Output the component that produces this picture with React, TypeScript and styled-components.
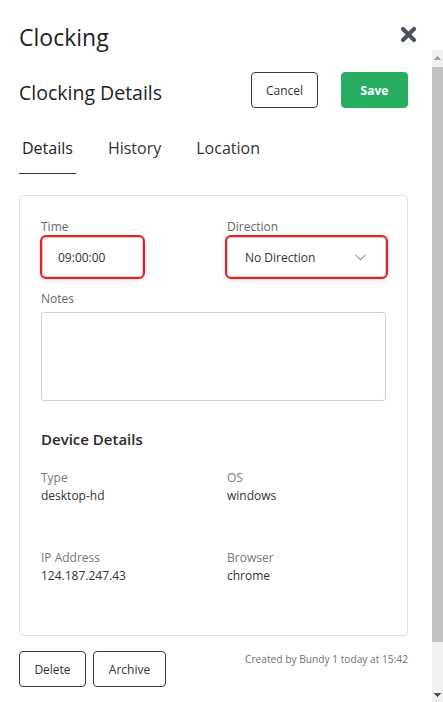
import React from 'react';
import styled, { createGlobalStyle } from 'styled-components';

const GlobalStyle = createGlobalStyle`
    * { box-sizing: border-box; }
    html, body {
        margin: 0;
        padding: 0;
        height: 100%;
        overflow: hidden;
        background: #fff;
    }
    body {
        font-family: "Open Sans", "Noto Sans", Arial, sans-serif;
        color: #333;
    }
`

const Page = styled.div`
    height: 100vh;
    display: flex;
    flex-direction: column;
`

const Header = styled.div`
    height: 50px;
    flex-shrink: 0;
    display: flex;
    justify-content: space-between;
    align-items: flex-start;
    padding: 21px 26px 0 19px;
`

const Title = styled.h1`
    margin: 0;
    font-size: 23px;
    font-weight: 400;
    color: #222;
    line-height: normal;
`

const CloseButton = styled.button`
    margin-top: 5px;
    width: 17px;
    height: 17px;
    padding: 0;
    border: none;
    background: transparent;
    cursor: pointer;
    display: flex;
`

const ScrollArea = styled.div`
    flex: 1;
    min-height: 0;
    display: flex;
`

const Pane = styled.div`
    flex: 1;
    overflow: hidden;
`

/* the window's scrollbar, drawn since the headless page hides native ones */
const ScrollTrack = styled.div`
    width: 11px;
    flex-shrink: 0;
    background: #f1f1f1;
    display: flex;
    flex-direction: column;
`

const ScrollArrow = styled.div<{ $down?: boolean }>`
    height: 15px;
    flex-shrink: 0;
    margin-top: ${p => (p.$down ? 'auto' : '0')};
    background-repeat: no-repeat;
    background-size: 7px 4px;
    background-position: center;
    background-image: ${p =>
        p.$down
            ? 'conic-gradient(from -41deg at 50% 100%, #505050 82deg, transparent 0)'
            : 'conic-gradient(from 139deg at 50% 0, #a3a3a3 82deg, transparent 0)'};
`

const ScrollThumb = styled.div`
    margin-top: 2px;
    height: 575px;
    background: #c1c1c1;
`

const Content = styled.div`
    padding: 22px 24px 67px 19px;
`

const TopRow = styled.div`
    display: flex;
    align-items: center;
`

const Heading = styled.h2`
    flex: 1;
    margin: 0;
    padding-top: 5px;
    font-size: 19.5px;
    font-weight: 400;
    color: #222;
    line-height: normal;
`

const Actions = styled.div`
    display: flex;
    gap: 23px;
`

const OutlineButton = styled.button<{ $width: number }>`
    width: ${p => p.$width}px;
    height: 36px;
    padding: 0;
    border: 1px solid #3a3a3a;
    border-radius: 4px;
    background: #fff;
    font-family: inherit;
    font-size: 12px;
    color: #333;
    cursor: pointer;
`

const SaveButton = styled.button`
    width: 67px;
    height: 36px;
    padding: 0;
    border: 1px solid #28ae60;
    border-radius: 4px;
    background: #28ae60;
    font-family: inherit;
    font-size: 12px;
    font-weight: 700;
    color: #fff;
    cursor: pointer;
`

const Tabs = styled.div`
    display: flex;
    gap: 29px;
    margin-top: 29px;
`

const Tab = styled.div<{ $active?: boolean }>`
    padding: 0 3px 14px;
    font-size: 16px;
    line-height: 22px;
    color: ${p => (p.$active ? '#222' : '#333')};
    border-bottom: 1.5px solid ${p => (p.$active ? '#333' : 'transparent')};
    cursor: pointer;
`

const Card = styled.div`
    margin-top: 21px;
    border: 1px solid #e2e2e2;
    border-radius: 4px;
    padding: 23px 21px 50px 21px;
`

const FieldGrid = styled.div`
    display: grid;
    grid-template-columns: 1fr 1fr;
    column-gap: 27px;
`

const Field = styled.div`
    display: flex;
    flex-direction: column;
    align-items: flex-start;
`

const Label = styled.label`
    font-size: 12px;
    line-height: 16px;
    color: #666;
    margin-bottom: 2px;
`

const TimeInput = styled.input`
    width: 101px;
    height: 40px;
    margin-left: 1px;
    padding: 0 0 0 15px;
    border: 1px solid #d0d0d0;
    border-radius: 4px;
    box-shadow: 0 1px 6px rgba(0, 0, 0, 0.25);
    outline: 2px solid #ee1c24;
    outline-offset: 0;
    font-family: inherit;
    font-size: 12px;
    color: #333;
    background: #fff;
`

const Select = styled.div`
    width: 100%;
    height: 40px;
    padding: 0 19px 0 17px;
    display: flex;
    align-items: center;
    justify-content: space-between;
    border: 1px solid #d0d0d0;
    border-radius: 4px;
    box-shadow: 0 1px 6px rgba(0, 0, 0, 0.25);
    outline: 2px solid #ee1c24;
    outline-offset: 0;
    font-size: 12px;
    color: #333;
    background: #fff;
    cursor: pointer;
`

const NotesField = styled(Field)`
    margin-top: 13.5px;
    align-items: stretch;
`

const Notes = styled.textarea`
    display: block;
    margin-top: 3px;
    width: 100%;
    height: 89px;
    border: 1px solid #cfcfcf;
    border-radius: 3px;
    resize: none;
    font-family: inherit;
    font-size: 12px;
`

const SectionTitle = styled.h3`
    margin: 28px 0 0;
    font-size: 15px;
    font-weight: 600;
    line-height: 20px;
    color: #2a2a2a;
`

const DeviceGrid = styled.div`
    display: grid;
    grid-template-columns: 1fr 1fr;
    column-gap: 27px;
    row-gap: 44px;
    margin-top: 20.5px;
`

const InfoLabel = styled.div`
    font-size: 12px;
    line-height: 18px;
    color: #777;
`

const InfoValue = styled.div`
    font-size: 12px;
    line-height: 18px;
    color: #333;
`

const Footer = styled.div`
    margin-top: 15px;
    display: flex;
    justify-content: space-between;
    align-items: flex-start;
`

const FooterButtons = styled.div`
    display: flex;
    gap: 7px;
`

const Meta = styled.div`
    margin-top: 1px;
    font-size: 10.2px;
    color: #6f6f6f;
    white-space: nowrap;
`

const CloseIcon = () => (
    <svg width="17" height="17" viewBox="0 0 17 17">
        <path d="M3 3 L14 14 M14 3 L3 14" stroke="#4b5259" strokeWidth="4.2" strokeLinecap="round" />
    </svg>
)

const Chevron = () => (
    <svg width="11" height="7" viewBox="0 0 11 7">
        <polyline points="0.7,0.8 5.5,5.6 10.3,0.8" fill="none" stroke="#9a9a9a" strokeWidth="1.1" />
    </svg>
)

const device = [
    { label: 'Type', value: 'desktop-hd' },
    { label: 'OS', value: 'windows' },
    { label: 'IP Address', value: '124.187.247.43' },
    { label: 'Browser', value: 'chrome' },
]

export default function App() {
    return (
        <>
            <GlobalStyle />
            <Page>
                <Header>
                    <Title>Clocking</Title>
                    <CloseButton aria-label="Close">
                        <CloseIcon />
                    </CloseButton>
                </Header>
                <ScrollArea>
                    <Pane>
                        <Content>
                            <TopRow>
                                <Heading>Clocking Details</Heading>
                                <Actions>
                                    <OutlineButton $width={67}>Cancel</OutlineButton>
                                    <SaveButton>Save</SaveButton>
                                </Actions>
                            </TopRow>

                            <Tabs>
                                <Tab $active>Details</Tab>
                                <Tab>History</Tab>
                                <Tab>Location</Tab>
                            </Tabs>

                            <Card>
                                <FieldGrid>
                                    <Field>
                                        <Label>Time</Label>
                                        <TimeInput readOnly value="09:00:00" />
                                    </Field>
                                    <Field>
                                        <Label>Direction</Label>
                                        <Select>
                                            <span>No Direction</span>
                                            <Chevron />
                                        </Select>
                                    </Field>
                                </FieldGrid>

                                <NotesField>
                                    <Label>Notes</Label>
                                    <Notes />
                                </NotesField>

                                <SectionTitle>Device Details</SectionTitle>
                                <DeviceGrid>
                                    {device.map(d => (
                                        <div key={d.label}>
                                            <InfoLabel>{d.label}</InfoLabel>
                                            <InfoValue>{d.value}</InfoValue>
                                        </div>
                                    ))}
                                </DeviceGrid>
                            </Card>

                            <Footer>
                                <FooterButtons>
                                    <OutlineButton $width={67}>Delete</OutlineButton>
                                    <OutlineButton $width={73}>Archive</OutlineButton>
                                </FooterButtons>
                                <Meta>Created by Bundy 1 today at 15:42</Meta>
                            </Footer>
                        </Content>
                    </Pane>
                    <ScrollTrack>
                        <ScrollArrow />
                        <ScrollThumb />
                        <ScrollArrow $down />
                    </ScrollTrack>
                </ScrollArea>
            </Page>
        </>
    );
}
